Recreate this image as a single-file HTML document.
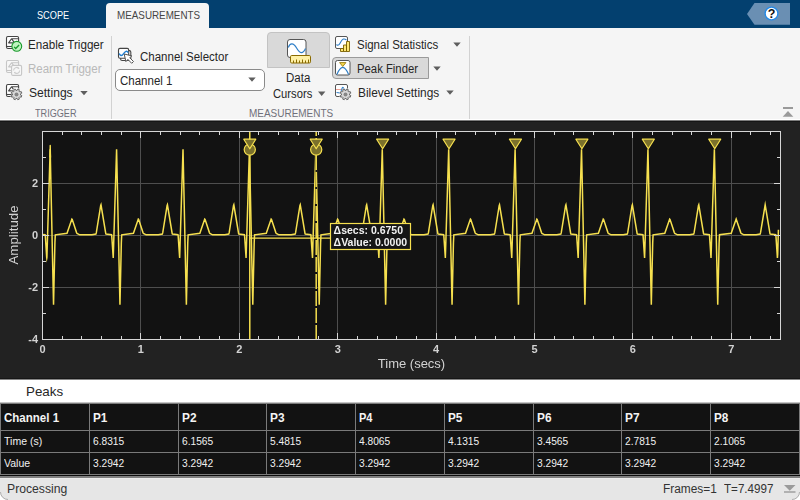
<!DOCTYPE html>
<html><head><meta charset="utf-8"><title>Scope</title>
<style>
html,body{margin:0;padding:0}
body{width:800px;height:500px;position:relative;overflow:hidden;background:#f5f5f5;font-family:"Liberation Sans",sans-serif;font-size:12px;color:#222}
.a{position:absolute}
.x{position:absolute;white-space:pre;line-height:1;transform-origin:0 0;display:inline-block}
.t{position:absolute;white-space:nowrap;line-height:14px;font-size:12.5px;color:#1f1f1f;letter-spacing:-0.35px}
.dis{color:#b9b9b9}
.sec{position:absolute;white-space:nowrap;font-size:11px;color:#6f6f78;letter-spacing:-0.45px;line-height:12px}
.tab{position:absolute;white-space:nowrap;font-size:11px;line-height:12px;letter-spacing:-0.5px}
.sep{position:absolute;width:1px;background:#d2d2d2;top:36px;height:83px}
.arr{position:absolute;width:0;height:0;border-left:3.7px solid transparent;border-right:3.7px solid transparent;border-top:4px solid #616161}
svg text.tl{font:bold 11px "Liberation Sans",sans-serif;fill:#d2d2d2}
svg text.al{font:13px "Liberation Sans",sans-serif;fill:#d2d2d2}
svg text.rd{font:bold 10.5px "Liberation Sans",sans-serif;fill:#f2f2f2}
.c{position:absolute;box-sizing:border-box;border-left:1px solid #7a7a7a;border-top:1px solid #7a7a7a;color:#f0f0f0;font-size:11.5px;letter-spacing:-0.3px}
.c span{position:absolute;left:4px;top:50%;transform:translateY(-50%);white-space:nowrap;line-height:14px}
.c.h{font-weight:bold;font-size:12px}
</style></head><body>
<!-- title bar -->
<div class="a" style="left:0;top:0;width:800px;height:28px;background:#03406f"></div>
<div class="a" style="left:106px;top:3px;width:103px;height:26px;background:#f5f5f5;border-radius:4px 4px 0 0"></div>
<span class="x" style="left:36.90px;top:10.11px;font-size:10.5px;color:#ffffff;transform:scaleX(0.8740)">SCOPE</span>
<span class="x" style="left:117.20px;top:10.11px;font-size:10.5px;color:#454545;transform:scaleX(0.9370)">MEASUREMENTS</span>
<svg class="a" style="left:740px;top:0" width="60" height="28" viewBox="740 0 60 28">
<path d="M747 14L754.5 3H790V24.7H754.5Z" fill="#6a8fb3"/>
<circle cx="771.5" cy="13.5" r="6.4" fill="#fff" stroke="#2389e8" stroke-width="1.4"/>
<text x="771.6" y="18" text-anchor="middle" style="font:bold 12.5px 'Liberation Sans',sans-serif;fill:#111">?</text>
</svg>
<!-- toolstrip bottom lines -->
<div class="a" style="left:0;top:119px;width:800px;height:1px;background:#fff"></div>
<!-- TRIGGER section -->
<span class="x" style="left:28.00px;top:39.42px;font-size:12.5px;color:#262626;transform:scaleX(0.9312)">Enable Trigger</span>
<span class="x" style="left:28.20px;top:63.42px;font-size:12.5px;color:#b9b9b9;transform:scaleX(0.9200)">Rearm Trigger</span>
<span class="x" style="left:29.00px;top:87.42px;font-size:12.5px;color:#262626;transform:scaleX(0.9660)">Settings</span>
<span class="x" style="left:34.50px;top:108.11px;font-size:10.5px;color:#70707a;transform:scaleX(0.8677)">TRIGGER</span>
<div class="sep" style="left:111px"></div>
<!-- MEASUREMENTS section -->
<span class="x" style="left:140.00px;top:51.42px;font-size:12.5px;color:#262626;transform:scaleX(0.9200)">Channel Selector</span>
<div class="a" style="left:115px;top:69px;width:150px;height:22px;box-sizing:border-box;border:1px solid #8a8a8a;border-radius:5px;background:#fff"></div>
<span class="x" style="left:120.00px;top:75.42px;font-size:12.5px;color:#262626;transform:scaleX(0.9200)">Channel 1</span>
<div class="a" style="left:267px;top:32px;width:63px;height:36px;box-sizing:border-box;border:1px solid #c3c3c3;border-radius:4px 4px 0 0;background:#d9d9d9"></div>
<span class="x" style="left:286.00px;top:72.42px;font-size:12.5px;color:#262626;transform:scaleX(0.9200)">Data</span>
<span class="x" style="left:272.50px;top:88.42px;font-size:12.5px;color:#262626;transform:scaleX(0.8970)">Cursors</span>
<span class="x" style="left:357.00px;top:39.42px;font-size:12.5px;color:#262626;transform:scaleX(0.9200)">Signal Statistics</span>
<div class="a" style="left:332px;top:57px;width:97px;height:22px;box-sizing:border-box;border:1px solid #9a9a9a;border-radius:4px 0 0 4px;background:#d9d9d9"></div>
<span class="x" style="left:356.50px;top:63.42px;font-size:12.5px;color:#262626;transform:scaleX(0.9049)">Peak Finder</span>
<span class="x" style="left:358.00px;top:87.42px;font-size:12.5px;color:#262626;transform:scaleX(0.9499)">Bilevel Settings</span>
<span class="x" style="left:249.20px;top:108.11px;font-size:10.5px;color:#70707a;transform:scaleX(0.9496)">MEASUREMENTS</span>
<div class="sep" style="left:469px"></div>
<!-- ICONS -->
<svg class="a" style="left:0;top:28px" width="480" height="92" viewBox="0 28 480 92">
<path d="M248.3 77.4h7.4l-3.7 4.3zM318.0 91.6h7.4l-3.7 4.3zM453.3 42.4h7.4l-3.7 4.3zM433.3 66.4h7.4l-3.7 4.3zM446.3 90.4h7.4l-3.7 4.3zM80.3 90.9h7.4l-3.7 4.3z" fill="#5e5e5e"/>
<!-- enable trigger -->
<g fill="none" stroke="#444" stroke-width="1.1">
<rect x="6.5" y="36.5" width="12.1" height="12" rx="1.4" fill="#fff"/>
<path d="M6.5 46.5h12.1"/>
<path d="M18.3 38.7H11.5L8.6 42.9H14.5L11.9 39.1" stroke-linejoin="round"/>
</g>
<circle cx="16.8" cy="46.3" r="4.9" fill="#bff3bf" stroke="#1a9a2c" stroke-width="1.1"/>
<path d="M14.1 46.9l1.6 1.6l3.4-3.5" fill="none" stroke="#1a9a2c" stroke-width="1.3"/>
<!-- rearm trigger (disabled) -->
<g fill="none" stroke="#c6c6c6" stroke-width="1.1">
<rect x="6.5" y="60.5" width="12.1" height="12" rx="1.4" fill="#f7f7f7"/>
<path d="M6.5 70.5h12.1"/>
<path d="M18.3 62.7H11.5L8.6 66.9H14.5L11.9 63.1" stroke-linejoin="round"/>
</g>
<rect x="11.6" y="65.4" width="10" height="10" rx="1.4" fill="#f7f7f7" stroke="#c6c6c6" stroke-width="1.1"/>
<path d="M13.6 70.4a3 3 0 0 1 5.2-2M19.6 70.4a3 3 0 0 1-5.2 2" fill="none" stroke="#cdcdcd" stroke-width="1.1"/>
<path d="M18.2 67.2l1.4 1.6l-2 0.300zM15 73.600l-1.400-1.600l2-0.300z" fill="#cdcdcd"/>
<!-- settings -->
<g fill="none" stroke="#444" stroke-width="1.1">
<rect x="6.5" y="84.5" width="12.1" height="12" rx="1.4" fill="#fff"/>
<path d="M6.5 94.5h12.1"/>
<path d="M18.3 86.7H11.5L8.6 90.9H14.5L11.9 87.1" stroke-linejoin="round"/>
</g>
<g id="gear">
<path d="M20.55 95.04L21.85 95.68L21.19 97.27L19.82 96.81L18.91 97.72L19.37 99.09L17.78 99.75L17.14 98.45L15.86 98.45L15.22 99.75L13.63 99.09L14.09 97.72L13.18 96.81L11.81 97.27L11.15 95.68L12.45 95.04L12.45 93.76L11.15 93.12L11.81 91.53L13.18 91.99L14.09 91.08L13.63 89.71L15.22 89.05L15.86 90.35L17.14 90.35L17.78 89.05L19.37 89.71L18.91 91.08L19.82 91.99L21.19 91.53L21.85 93.12L20.55 93.76Z" fill="#dcdcdc" stroke="#f5f5f5" stroke-width="1.6" stroke-linejoin="round"/>
<path d="M20.55 95.04L21.85 95.68L21.19 97.27L19.82 96.81L18.91 97.72L19.37 99.09L17.78 99.75L17.14 98.45L15.86 98.45L15.22 99.75L13.63 99.09L14.09 97.72L13.18 96.81L11.81 97.27L11.15 95.68L12.45 95.04L12.45 93.76L11.15 93.12L11.81 91.53L13.18 91.99L14.09 91.08L13.63 89.71L15.22 89.05L15.86 90.35L17.14 90.35L17.78 89.05L19.37 89.71L18.91 91.08L19.82 91.99L21.19 91.53L21.85 93.12L20.55 93.76Z" fill="#d9d9d9" stroke="#5c5c5c" stroke-width="0.9" stroke-linejoin="round"/>
<circle cx="16.5" cy="94.4" r="2" fill="#868686"/>
</g>
<!-- channel selector -->
<g fill="#fff" stroke="#444" stroke-width="1.1">
<rect x="120.6" y="50.6" width="10.2" height="9.9" rx="1.5"/>
<rect x="118.5" y="48.4" width="10.2" height="9.8" rx="1.5"/>
</g>
<path d="M119.2 53.6C119.9 55.4 121.6 56.7 123.4 53.9S126.9 50.4 128.2 52.6" fill="none" stroke="#1f7fd2" stroke-width="1.4"/>
<path d="M124.2 54L125.9 61.6L127.9 59.4L131.7 63.3L133.5 61.5L129.7 57.7L131.9 55.9Z" fill="#fff" stroke="#555" stroke-width="1" stroke-linejoin="round"/>
<!-- data cursors -->
<rect x="287.5" y="39.5" width="18.5" height="18" rx="2.5" fill="#fff" stroke="#555"/>
<path d="M288.3 47.5C290 42.5 293.5 42.5 296.6 48S302.8 54.5 305.5 48.5" fill="none" stroke="#2f7fc8" stroke-width="1.2"/>
<rect x="290.500" y="55.500" width="20" height="7.500" rx="1.2" fill="#fff1a6" stroke="#8a6a00"/>
<path d="M293.5 63v-2.500M296.500 63v-3.500M299.500 63v-2.500M302.500 63v-3.500M305.500 63v-2.500M308.500 63v-3.500" stroke="#8a6a00" stroke-width="1"/>
<!-- signal statistics -->
<rect x="335.500" y="36.500" width="12" height="12" rx="1.500" fill="#fff" stroke="#555"/>
<path d="M336.500 44.500c2 2 3-0.500 4.500-3s3-3.500 5.500-1.500" fill="none" stroke="#2f7fc8" stroke-width="1.100"/>
<path d="M340.500 48.500h3v3h-3zM343.500 45h3v6.500h-3zM346.500 41.500h3v10h-3z" fill="#ffe873" stroke="#7a6000" stroke-width="0.900"/>
<!-- peak finder -->
<rect x="335.500" y="60.500" width="14.500" height="14.500" rx="2" fill="#fff" stroke="#555"/>
<path d="M336.9 74.6Q342.75 60.3 348.6 74.6" fill="none" stroke="#2f7fc8" stroke-width="1.2"/>
<path d="M339.6 62.6h6.3l-3.150 3.900z" fill="#f5d94e" stroke="#9a7a10" stroke-width="0.900" stroke-linejoin="round"/>
<!-- bilevel -->
<rect x="335.500" y="84.500" width="12" height="12" rx="1.500" fill="#fff" stroke="#555"/>
<path d="M336.500 89.500h5" stroke="#e0422a" stroke-width="1" stroke-dasharray="1 1"/>
<path d="M336.500 92.500c2 0 3 1 4 0s1.500-6 2.500-5s1.500 4 3.500 2" fill="none" stroke="#2f7fc8" stroke-width="1.100"/>
<use href="#gear" x="329" y="0"/>
</svg>
<!-- collapse icon -->
<svg class="a" style="left:780px;top:104px" width="16" height="15" viewBox="780 104 16 15"><rect x="783" y="107" width="10" height="2" fill="#9a9a9a"/><path d="M788 111L793.300 116.800H782.700Z" fill="#9a9a9a"/></svg>
<!-- FIGURE -->
<div class="a" style="left:0;top:120px;width:800px;height:258px;background:#222"></div>
<div class="a" style="left:0;top:378px;width:800px;height:1px;background:#161616"></div>
<div class="a" style="left:0;top:379px;width:800px;height:1px;background:#868686"></div>
<div class="a" style="left:0;top:120px;width:800px;height:1px;background:#7e7e7e"></div>
<div class="a" style="left:0;top:121px;width:800px;height:1px;background:#161616"></div>
<svg class="a" style="left:0;top:120px;will-change:transform" width="800" height="259" viewBox="0 120 800 259">
<rect x="42" y="131" width="739" height="209" fill="#121212"/>
<line x1="43" x2="780" y1="183.5" y2="183.5" stroke="#4e4e4e" stroke-width="1"/>
<line x1="43" x2="780" y1="235.5" y2="235.5" stroke="#4e4e4e" stroke-width="1"/>
<line x1="43" x2="780" y1="287.5" y2="287.5" stroke="#4e4e4e" stroke-width="1"/>
<line y1="132" y2="339" x1="140.5" x2="140.5" stroke="#4e4e4e" stroke-width="1"/>
<line y1="132" y2="339" x1="239.5" x2="239.5" stroke="#4e4e4e" stroke-width="1"/>
<line y1="132" y2="339" x1="337.5" x2="337.5" stroke="#4e4e4e" stroke-width="1"/>
<line y1="132" y2="339" x1="436.5" x2="436.5" stroke="#4e4e4e" stroke-width="1"/>
<line y1="132" y2="339" x1="534.5" x2="534.5" stroke="#4e4e4e" stroke-width="1"/>
<line y1="132" y2="339" x1="632.5" x2="632.5" stroke="#4e4e4e" stroke-width="1"/>
<line y1="132" y2="339" x1="731.5" x2="731.5" stroke="#4e4e4e" stroke-width="1"/>
<clipPath id="pc"><rect x="42" y="131" width="739" height="209"/></clipPath>
<g clip-path="url(#pc)"><path d="M42.20 234.39 L45.15 234.77 L45.28 235.09 L46.68 257.09 L46.80 258.00 L46.92 257.37 L50.17 149.15 L53.54 304.68 L54.92 242.77 L55.29 234.83 L67.02 233.22 L71.89 219.03 L72.21 219.35 L76.57 232.58 L77.03 233.40 L79.74 234.80 L91.92 234.80 L95.90 234.06 L96.34 232.64 L100.70 205.49 L100.99 204.79 L105.79 233.71 L106.01 234.06 L111.57 234.77 L111.70 235.09 L113.24 258.00 L116.59 149.15 L119.96 304.68 L121.34 242.77 L121.71 234.83 L133.44 233.22 L138.31 219.03 L138.63 219.35 L142.99 232.58 L143.45 233.40 L146.16 234.80 L158.34 234.80 L162.32 234.06 L162.76 232.64 L167.12 205.49 L167.41 204.79 L172.21 233.71 L172.43 234.06 L177.99 234.77 L178.12 235.09 L179.66 258.00 L183.01 149.15 L186.38 304.68 L187.76 242.77 L188.13 234.83 L199.86 233.22 L204.73 219.03 L205.05 219.35 L209.41 232.58 L209.87 233.40 L212.58 234.80 L224.76 234.80 L228.74 234.06 L229.18 232.64 L233.54 205.49 L233.83 204.79 L238.63 233.71 L238.85 234.06 L244.41 234.77 L244.54 235.09 L246.08 258.00 L249.43 149.15 L252.80 304.68 L254.18 242.77 L254.55 234.83 L266.28 233.22 L271.15 219.03 L271.47 219.35 L275.83 232.58 L276.29 233.40 L279.00 234.80 L291.18 234.80 L295.16 234.06 L295.60 232.64 L299.96 205.49 L300.25 204.79 L305.05 233.71 L305.27 234.06 L310.83 234.77 L310.95 235.09 L312.50 258.00 L315.85 149.15 L319.22 304.68 L320.60 242.77 L320.97 234.83 L332.70 233.22 L337.57 219.03 L337.89 219.35 L342.25 232.58 L342.71 233.40 L345.42 234.80 L357.60 234.80 L361.58 234.06 L362.02 232.64 L366.38 205.49 L366.67 204.79 L371.47 233.71 L371.69 234.06 L377.25 234.77 L377.38 235.09 L378.92 258.00 L382.27 149.15 L385.64 304.68 L387.02 242.77 L387.39 234.83 L399.12 233.22 L403.99 219.03 L404.31 219.35 L408.67 232.58 L409.13 233.40 L411.84 234.80 L424.02 234.80 L428.00 234.06 L428.44 232.64 L432.80 205.49 L433.09 204.79 L437.89 233.71 L438.11 234.06 L443.67 234.77 L443.80 235.09 L445.34 258.00 L448.69 149.15 L452.06 304.68 L453.44 242.77 L453.81 234.83 L465.54 233.22 L470.41 219.03 L470.73 219.35 L475.09 232.58 L475.55 233.40 L478.26 234.80 L490.44 234.80 L494.42 234.06 L494.86 232.64 L499.22 205.49 L499.51 204.79 L504.31 233.71 L504.53 234.06 L510.09 234.77 L510.21 235.09 L511.76 258.00 L515.11 149.15 L518.48 304.68 L519.86 242.77 L520.23 234.83 L531.96 233.22 L536.83 219.03 L537.15 219.35 L541.51 232.58 L541.97 233.40 L544.68 234.80 L556.86 234.80 L560.84 234.06 L561.28 232.64 L565.64 205.49 L565.93 204.79 L570.73 233.71 L570.95 234.06 L576.51 234.77 L576.64 235.09 L578.18 258.00 L581.53 149.15 L584.90 304.68 L586.28 242.77 L586.65 234.83 L598.38 233.22 L603.25 219.03 L603.57 219.35 L607.93 232.58 L608.39 233.40 L611.10 234.80 L623.28 234.80 L627.26 234.06 L627.70 232.64 L632.06 205.49 L632.35 204.79 L637.15 233.71 L637.37 234.06 L642.93 234.77 L643.06 235.09 L644.60 258.00 L647.95 149.15 L651.32 304.68 L652.70 242.77 L653.07 234.83 L664.80 233.22 L669.67 219.03 L669.99 219.35 L674.35 232.58 L674.81 233.40 L677.52 234.80 L689.70 234.80 L693.68 234.06 L694.12 232.64 L698.48 205.49 L698.77 204.79 L703.57 233.71 L703.79 234.06 L709.35 234.77 L709.48 235.09 L711.02 258.00 L714.37 149.15 L717.74 304.68 L719.12 242.77 L719.51 234.77 L731.22 233.22 L736.17 219.00 L740.77 232.58 L741.23 233.40 L743.94 234.80 L756.12 234.80 L760.10 234.06 L760.54 232.64 L765.17 204.76 L769.99 233.71 L770.21 234.06 L775.77 234.77 L775.89 235.09 L777.42 258.00 L777.72 253.89 L778.40 229.76" fill="none" stroke="#f6e04f" stroke-width="1.5" stroke-linejoin="miter" stroke-miterlimit="10"/>
<path d="M49.97 157.40 L50.22 145.48 L50.47 157.40" fill="none" stroke="#f6e04f" stroke-width="1.4" stroke-linejoin="round"/>
</g>
<rect x="42.5" y="131.5" width="738" height="208" fill="none" stroke="#d6d6d6" stroke-width="1"/>
<path d="M62.5 339V336M62.5 132v3M81.5 339V336M81.5 132v3M101.5 339V336M101.5 132v3M121.5 339V336M121.5 132v3M140.5 339V333M140.5 132v6M160.5 339V336M160.5 132v3M180.5 339V336M180.5 132v3M199.5 339V336M199.5 132v3M219.5 339V336M219.5 132v3M239.5 339V333M239.5 132v6M258.5 339V336M258.5 132v3M278.5 339V336M278.5 132v3M298.5 339V336M298.5 132v3M318.5 339V336M318.5 132v3M337.5 339V333M337.5 132v6M357.5 339V336M357.5 132v3M377.5 339V336M377.5 132v3M396.5 339V336M396.5 132v3M416.5 339V336M416.5 132v3M436.5 339V333M436.5 132v6M455.5 339V336M455.5 132v3M475.5 339V336M475.5 132v3M495.5 339V336M495.5 132v3M514.5 339V336M514.5 132v3M534.5 339V333M534.5 132v6M554.5 339V336M554.5 132v3M573.5 339V336M573.5 132v3M593.5 339V336M593.5 132v3M613.5 339V336M613.5 132v3M632.5 339V333M632.5 132v6M652.5 339V336M652.5 132v3M672.5 339V336M672.5 132v3M691.5 339V336M691.5 132v3M711.5 339V336M711.5 132v3M731.5 339V333M731.5 132v6M750.5 339V336M750.5 132v3M770.5 339V336M770.5 132v3M43 313.5h3M780 313.5h-3M43 287.5h6M780 287.5h-6M43 261.5h3M780 261.5h-3M43 235.5h6M780 235.5h-6M43 209.5h3M780 209.5h-3M43 183.5h6M780 183.5h-6M43 157.5h3M780 157.5h-3" stroke="#d6d6d6" stroke-width="1" fill="none"/>
<text x="42.5" y="353" text-anchor="middle" class="tl">0</text>
<text x="140.9" y="353" text-anchor="middle" class="tl">1</text>
<text x="239.3" y="353" text-anchor="middle" class="tl">2</text>
<text x="337.7" y="353" text-anchor="middle" class="tl">3</text>
<text x="436.1" y="353" text-anchor="middle" class="tl">4</text>
<text x="534.5" y="353" text-anchor="middle" class="tl">5</text>
<text x="632.9" y="353" text-anchor="middle" class="tl">6</text>
<text x="731.3" y="353" text-anchor="middle" class="tl">7</text>
<text x="38" y="187.4" text-anchor="end" class="tl">2</text>
<text x="38" y="239.4" text-anchor="end" class="tl">0</text>
<text x="38" y="291.4" text-anchor="end" class="tl">-2</text>
<text x="38" y="343.4" text-anchor="end" class="tl">-4</text>
<text x="411.5" y="368" text-anchor="middle" class="al">Time (secs)</text>
<text transform="translate(17.6,235) rotate(-90)" text-anchor="middle" class="al" style="font-size:13.3px">Amplitude</text>
<line x1="249.78" x2="249.78" y1="132" y2="339" stroke="#f6e04f" stroke-width="1.5"/>
<line x1="316.20" x2="316.20" y1="132" y2="339" stroke="#111" stroke-width="1.5"/>
<line x1="316.20" x2="316.20" y1="138" y2="339" stroke="#f6e04f" stroke-width="1.5" stroke-dasharray="15 2"/>
<line x1="316.20" x2="316.20" y1="132" y2="136" stroke="#f6e04f" stroke-width="1.5"/>
<circle cx="249.78" cy="149.6" r="5.6" fill="#7b712c" stroke="#f6e04f" stroke-width="1.2"/>
<circle cx="316.20" cy="149.6" r="5.6" fill="#7b712c" stroke="#f6e04f" stroke-width="1.2"/>
<path d="M243.78 139.2H255.78L249.78 148.8Z" fill="#7b712c" stroke="#f6e04f" stroke-width="1.2" stroke-linejoin="round"/>
<path d="M310.20 139.2H322.20L316.20 148.8Z" fill="#7b712c" stroke="#f6e04f" stroke-width="1.2" stroke-linejoin="round"/>
<path d="M376.62 139.2H388.62L382.62 148.8Z" fill="#7b712c" stroke="#f6e04f" stroke-width="1.2" stroke-linejoin="round"/>
<path d="M443.04 139.2H455.04L449.04 148.8Z" fill="#7b712c" stroke="#f6e04f" stroke-width="1.2" stroke-linejoin="round"/>
<path d="M509.46 139.2H521.46L515.46 148.8Z" fill="#7b712c" stroke="#f6e04f" stroke-width="1.2" stroke-linejoin="round"/>
<path d="M575.88 139.2H587.88L581.88 148.8Z" fill="#7b712c" stroke="#f6e04f" stroke-width="1.2" stroke-linejoin="round"/>
<path d="M642.30 139.2H654.30L648.30 148.8Z" fill="#7b712c" stroke="#f6e04f" stroke-width="1.2" stroke-linejoin="round"/>
<path d="M708.72 139.2H720.72L714.72 148.8Z" fill="#7b712c" stroke="#f6e04f" stroke-width="1.2" stroke-linejoin="round"/>
<line x1="249.78" x2="330" y1="238.1" y2="238.1" stroke="#f6e04f" stroke-width="1.4"/>
<rect x="330.5" y="223.5" width="80" height="26" fill="#161616" stroke="#f6e04f" stroke-width="1.2"/>
<text x="333.6" y="233.8" class="rd">Δsecs: 0.6750</text>
<text x="333.6" y="245.7" class="rd">ΔValue: 0.0000</text>
</svg>
<!-- Peaks panel -->
<div class="a" style="left:0;top:380px;width:800px;height:22px;background:#fff"></div>
<div class="a" style="left:0;top:402px;width:800px;height:1px;background:#c4c4c4"></div>
<span class="x" style="left:25.80px;top:384.50px;font-size:13px;color:#262626;transform:scaleX(1.0278)">Peaks</span>
<div class="a" style="left:0;top:403px;width:800px;height:73px;background:#121212"></div>
<div class="a" style="left:0px;top:403px;width:1px;height:72px;background:#7a7a7a"></div>
<div class="a" style="left:89px;top:403px;width:1px;height:72px;background:#7a7a7a"></div>
<div class="a" style="left:178px;top:403px;width:1px;height:72px;background:#7a7a7a"></div>
<div class="a" style="left:266px;top:403px;width:1px;height:72px;background:#7a7a7a"></div>
<div class="a" style="left:355px;top:403px;width:1px;height:72px;background:#7a7a7a"></div>
<div class="a" style="left:444px;top:403px;width:1px;height:72px;background:#7a7a7a"></div>
<div class="a" style="left:533px;top:403px;width:1px;height:72px;background:#7a7a7a"></div>
<div class="a" style="left:621px;top:403px;width:1px;height:72px;background:#7a7a7a"></div>
<div class="a" style="left:710px;top:403px;width:1px;height:72px;background:#7a7a7a"></div>
<div class="a" style="left:0;top:403px;width:800px;height:1px;background:#7a7a7a"></div>
<div class="a" style="left:0;top:430px;width:800px;height:1px;background:#7a7a7a"></div>
<div class="a" style="left:0;top:452px;width:800px;height:1px;background:#7a7a7a"></div>
<span class="x" style="left:4.30px;top:411.84px;font-size:12px;color:#f4f4f4;font-weight:bold;transform:scaleX(0.9599)">Channel 1</span>
<span class="x" style="left:3.90px;top:435.10px;font-size:11.7px;color:#f0f0f0;transform:scaleX(0.9014)">Time (s)</span>
<span class="x" style="left:3.90px;top:457.10px;font-size:11.7px;color:#f0f0f0;transform:scaleX(0.9002)">Value</span>
<span class="x" style="left:92.90px;top:411.84px;font-size:12px;color:#f4f4f4;font-weight:bold;transform:scaleX(0.9796)">P1</span>
<span class="x" style="left:92.80px;top:435.10px;font-size:11.7px;color:#f0f0f0;transform:scaleX(0.8726)">6.8315</span>
<span class="x" style="left:92.80px;top:457.10px;font-size:11.7px;color:#f0f0f0;transform:scaleX(0.8726)">3.2942</span>
<span class="x" style="left:181.90px;top:411.84px;font-size:12px;color:#f4f4f4;font-weight:bold;transform:scaleX(0.9890)">P2</span>
<span class="x" style="left:181.80px;top:435.10px;font-size:11.7px;color:#f0f0f0;transform:scaleX(0.8726)">6.1565</span>
<span class="x" style="left:181.80px;top:457.10px;font-size:11.7px;color:#f0f0f0;transform:scaleX(0.8726)">3.2942</span>
<span class="x" style="left:269.90px;top:411.84px;font-size:12px;color:#f4f4f4;font-weight:bold;transform:scaleX(0.9890)">P3</span>
<span class="x" style="left:269.80px;top:435.10px;font-size:11.7px;color:#f0f0f0;transform:scaleX(0.8726)">5.4815</span>
<span class="x" style="left:269.80px;top:457.10px;font-size:11.7px;color:#f0f0f0;transform:scaleX(0.8726)">3.2942</span>
<span class="x" style="left:358.90px;top:411.84px;font-size:12px;color:#f4f4f4;font-weight:bold;transform:scaleX(0.9200)">P4</span>
<span class="x" style="left:358.80px;top:435.10px;font-size:11.7px;color:#f0f0f0;transform:scaleX(0.8726)">4.8065</span>
<span class="x" style="left:358.80px;top:457.10px;font-size:11.7px;color:#f0f0f0;transform:scaleX(0.8726)">3.2942</span>
<span class="x" style="left:447.90px;top:411.84px;font-size:12px;color:#f4f4f4;font-weight:bold;transform:scaleX(0.9796)">P5</span>
<span class="x" style="left:447.80px;top:435.10px;font-size:11.7px;color:#f0f0f0;transform:scaleX(0.8726)">4.1315</span>
<span class="x" style="left:447.80px;top:457.10px;font-size:11.7px;color:#f0f0f0;transform:scaleX(0.8726)">3.2942</span>
<span class="x" style="left:536.90px;top:411.84px;font-size:12px;color:#f4f4f4;font-weight:bold;transform:scaleX(0.9890)">P6</span>
<span class="x" style="left:536.80px;top:435.10px;font-size:11.7px;color:#f0f0f0;transform:scaleX(0.8726)">3.4565</span>
<span class="x" style="left:536.80px;top:457.10px;font-size:11.7px;color:#f0f0f0;transform:scaleX(0.8726)">3.2942</span>
<span class="x" style="left:624.90px;top:411.84px;font-size:12px;color:#f4f4f4;font-weight:bold;transform:scaleX(0.9890)">P7</span>
<span class="x" style="left:624.80px;top:435.10px;font-size:11.7px;color:#f0f0f0;transform:scaleX(0.8726)">2.7815</span>
<span class="x" style="left:624.80px;top:457.10px;font-size:11.7px;color:#f0f0f0;transform:scaleX(0.8726)">3.2942</span>
<span class="x" style="left:713.90px;top:411.84px;font-size:12px;color:#f4f4f4;font-weight:bold;transform:scaleX(0.9796)">P8</span>
<span class="x" style="left:713.80px;top:435.10px;font-size:11.7px;color:#f0f0f0;transform:scaleX(0.8726)">2.1065</span>
<span class="x" style="left:713.80px;top:457.10px;font-size:11.7px;color:#f0f0f0;transform:scaleX(0.8726)">3.2942</span>
<div class="a" style="left:799px;top:403px;width:1px;height:72px;background:#7a7a7a"></div>
<div class="a" style="left:0;top:474px;width:800px;height:1px;background:#7a7a7a"></div>
<div class="a" style="left:0;top:475px;width:800px;height:1px;background:#0d0d0d"></div>
<div class="a" style="left:0;top:476px;width:800px;height:2px;background:#808080"></div>
<!-- status bar -->
<div class="a" style="left:0;top:478px;width:800px;height:22px;background:#e6e6e6"></div>
<div class="a" style="left:0;top:478px;width:800px;height:1px;background:#ececec"></div>
<span class="x" style="left:7.00px;top:482.84px;font-size:12px;color:#333333;transform:scaleX(1.0155)">Processing</span>
<span class="x" style="left:663.00px;top:482.84px;font-size:12px;color:#333333;transform:scaleX(0.9904)">Frames=1</span><span class="x" style="left:723.75px;top:482.84px;font-size:12px;color:#333333;transform:scaleX(0.9689)">T=7.4997</span>
<svg class="a" style="left:780px;top:482px" width="18" height="14" viewBox="780 482 18 14"><path d="M784 485H795.500L789.750 490.800Z" fill="#9a9a9a"/><rect x="784" y="491.300" width="11.500" height="1.400" fill="#9a9a9a"/></svg>
<svg class="a" style="left:0;top:492px" width="8" height="8" viewBox="0 0 8 8"><path d="M0 0V8H8A8 8 0 0 1 0 0Z" fill="#fff"/><path d="M0.5 0A7.5 7.5 0 0 0 8 7.5" fill="none" stroke="#b0b0b0" stroke-width="1"/></svg>
<svg class="a" style="left:792px;top:492px" width="8" height="8" viewBox="0 0 8 8"><path d="M8 0V8H0A8 8 0 0 0 8 0Z" fill="#fff"/><path d="M7.5 0A7.5 7.5 0 0 1 0 7.5" fill="none" stroke="#b0b0b0" stroke-width="1"/></svg>
</body></html>
